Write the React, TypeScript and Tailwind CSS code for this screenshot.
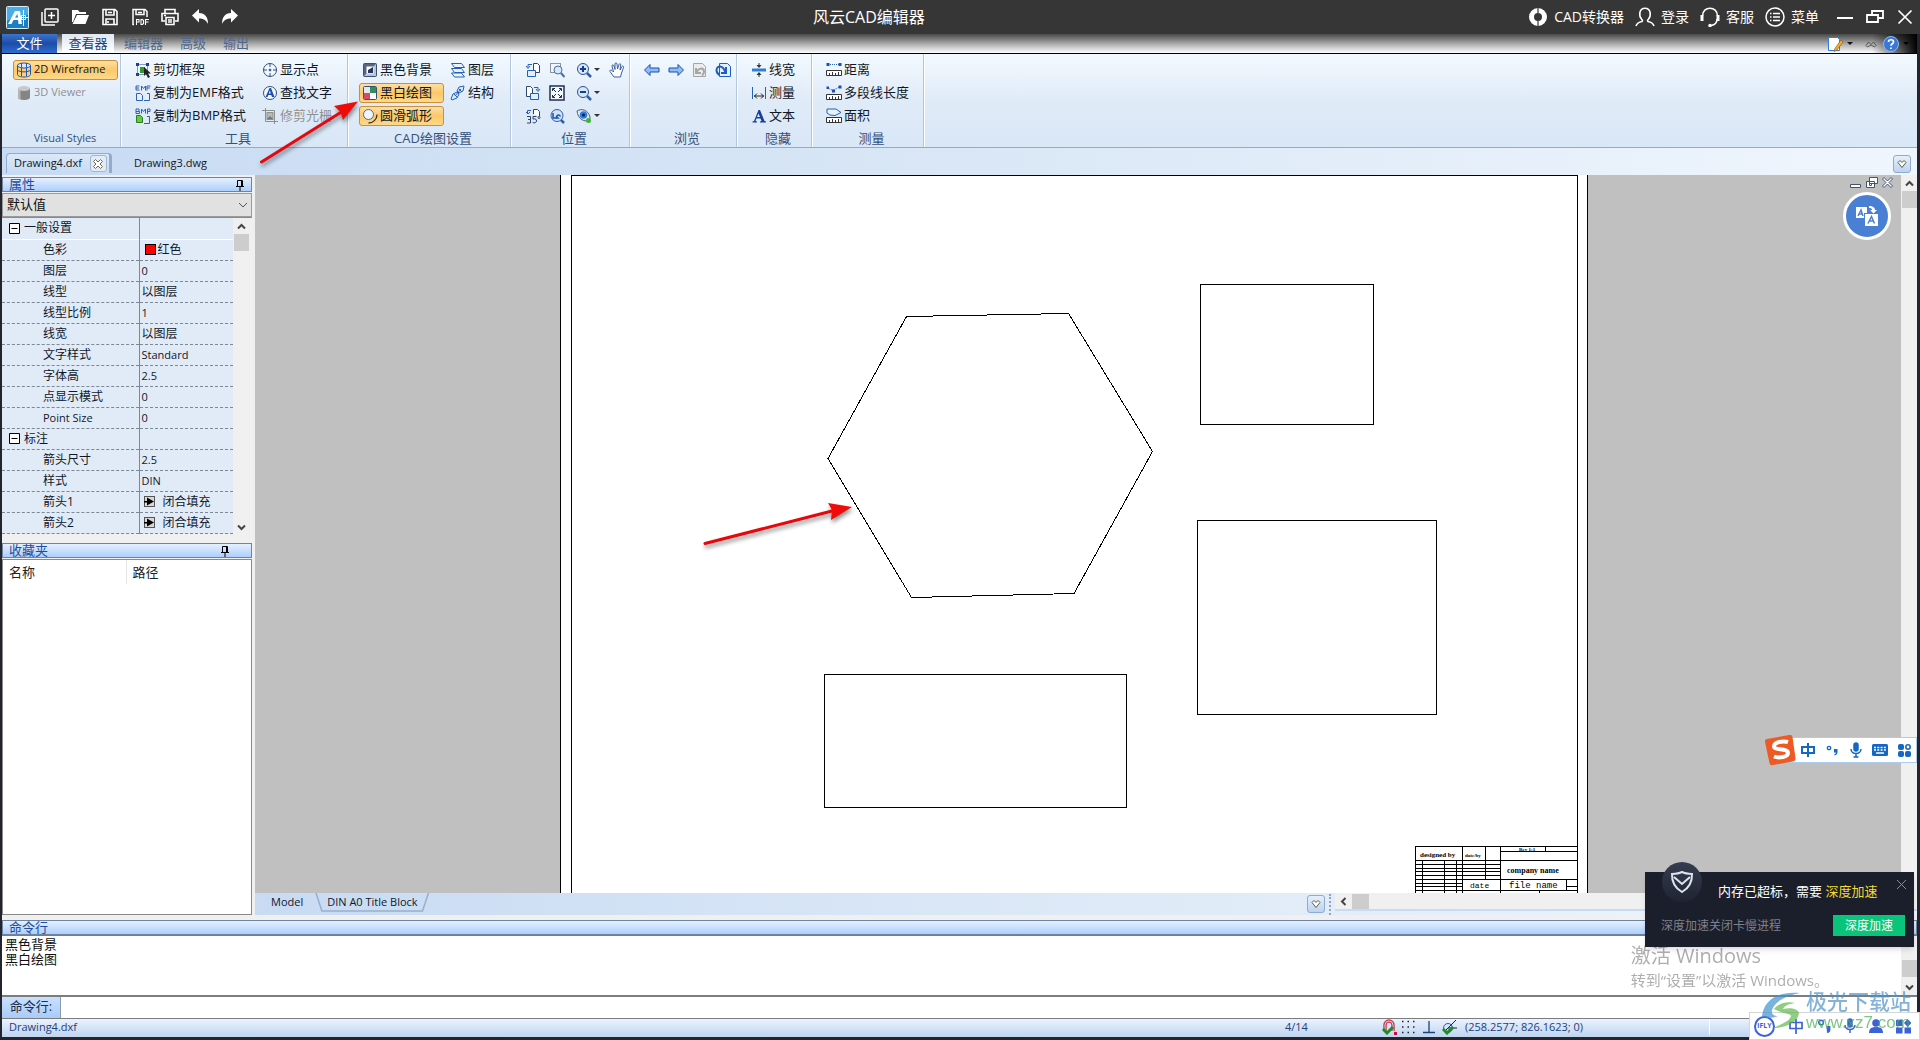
import React, { useState } from 'react';

const uiFont = "font-['Open_Sans','Noto_Sans_CJK_SC',sans-serif]";

const icons: Record<string, React.ReactNode> = {
  wireframe: (
    <g fill="none" stroke="#1d55b5">
      <ellipse cx="8" cy="3.5" rx="6.5" ry="2.5" fill="#dbe9fb" />
      <path d="M1.500 3.500v9c0 1.500 3 2.500 6.500 2.500s6.500-1 6.500-2.500v-9M5.500 5.500v9M10.500 5.500v9M1.500 8c2 2.500 11 2.500 13 0M5.500 1v4M10.500 1v4" />
    </g>
  ),
  cylinder: (
    <g>
      <path d="M2 3.500v9c0 1.500 2.500 2.500 6 2.500s6-1 6-2.500v-9z" fill="#858585" />
      <path d="M2 3.500v9c0 .8 1 1.500 2.500 2V4z" fill="#b5b5b5" />
      <ellipse cx="8" cy="3.500" rx="6" ry="2.500" fill="#c9c9c9" />
    </g>
  ),
  clip: (
    <g>
      <rect x="2.500" y="2.500" width="10" height="10" fill="none" stroke="#1f3f8f" strokeDasharray="1 1" />
      <path d="M1 1h3v3H1zM11 1h3v3h-3zM1 11h3v3H1z" fill="#1f3f8f" />
      <rect x="5" y="5" width="5" height="6" fill="#2f9b2f" />
      <path d="M9 5v9l2-2 2 4 2-1-2-3.500h3z" fill="#222" />
    </g>
  ),
  emf: (
    <g fill="none" stroke="#2b62b8">
      <path d="M4.500 1H1v4h3.500M1 3h3M6.500 5.500V1l2 2.500 2-2.500v4.500M15.500 1H12v4.500M12 3h3" />
      <path d="M1.500 8.500h4l2 2v5h-6zM9 15.500h5.500v-7H12" fill="#e6effb" />
    </g>
  ),
  bmp: (
    <g fill="none" stroke="#2b62b8">
      <path d="M1 1v4.500h3.500V3.500H1h3V1zM6.500 5.500V1l2 2.500 2-2.500v4.500M12.500 6V1H15v2.500h-2.500" />
      <path d="M9 15.500h5.500v-7H12" />
      <path d="M1.500 7.500h4l2 2v5h-6z" fill="#5fcf3f" stroke="#2c7c24" />
    </g>
  ),
  point: (
    <g fill="none" stroke="#34507c">
      <circle cx="8" cy="8" r="6.500" fill="#f3f8fe" />
      <path d="M8 1v4M8 11v4M1 8h4M11 8h4" />
      <circle cx="8" cy="8" r="1" fill="#2b62b8" stroke="#2b62b8" />
    </g>
  ),
  findText: (
    <g>
      <circle cx="8" cy="8" r="6.500" fill="#f3f8fe" stroke="#34507c" />
      <path d="M3.500 12 7.500 3h1.500l3.500 9h-2.500l-.8-2H6.300l-.7 2zM6.800 8.500h2L7.900 5.500z" fill="#1d4fae" />
    </g>
  ),
  raster: (
    <g fill="none" stroke="#8f8f8f">
      <path d="M3.500 0v13.500H16M0 2.500h12.500V16" />
      <rect x="5" y="4.500" width="6" height="7" fill="#b8b8b8" />
      <path d="M5 11l3-3 3 3z" fill="#777" stroke="none" />
    </g>
  ),
  blackBg: (
    <g>
      <rect x="1.500" y="1.500" width="13" height="13" rx="1" fill="#5a6680" stroke="#3c4f73" />
      <path d="M2 14 14 2v12z" fill="#b4c6e2" />
      <path d="M4.500 4.500h7v7h-7z" fill="#fff" />
      <path d="M6 11V8l5-3v6z" fill="#27375a" />
    </g>
  ),
  blackWhite: (
    <g>
      <rect x="1.500" y="1.500" width="13" height="13" rx="1" fill="#fff" stroke="#34507c" />
      <path d="M8 2h6v6H8z" fill="#2f8f56" />
      <path d="M2 8h6v6H2z" fill="#d6496b" />
      <path d="M2 2h6v6H2z" fill="#dfe8f4" />
    </g>
  ),
  arc: (
    <g fill="none">
      <circle cx="6.500" cy="6.500" r="5" fill="#eef5fe" stroke="#3b6cb8" />
      <path d="M15 6.500c0 5-4 8.500-8.500 8.500" stroke="#333" strokeWidth="1.300" />
    </g>
  ),
  layers: (
    <g fill="#e9f2fd" stroke="#2560b8">
      <path d="M1.500 11h10l3 4h-10zM1.500 6.500h10l3 4h-10zM1.500 1.500h10l3 4h-10z" />
    </g>
  ),
  structure: (
    <g fill="#dbe9fb" stroke="#2560b8">
      <path d="M9 2l5-1-1 5-4 2-2-2zM3 9l4-2 2 2-2 4-5 2-1-1z" />
      <path d="M5 11l6-7M4 9l3 3M9 4l3 3" fill="none" />
    </g>
  ),
  rotateLeft: (
    <g fill="#fff" stroke="#2b456f">
      <path d="M8.500 1.500h4l2 2v7h-6z" />
      <path d="M2.500 8.500h8v6h-8z" fill="#e3eefb" stroke="#2560b8" />
      <path d="M7 2.500H3V5M1 4l2 2.500L5 4" fill="none" stroke="#2560b8" />
    </g>
  ),
  rotateRight: (
    <g fill="#fff" stroke="#2b456f">
      <path d="M1.500 1.500h4l2 2v8h-6z" />
      <path d="M5.500 8.500h8v6h-8z" fill="#e3eefb" stroke="#2560b8" />
      <path d="M9 2.500h4V5M11 4l2 2.500L15 4" fill="none" stroke="#2560b8" />
    </g>
  ),
  rotate35: (
    <g fill="none" stroke="#2b456f">
      <path d="M8.500 6V1.500h4l2 2V8" fill="#fff" />
      <path d="M6 2.500H2.500V5M1 4l2 2 2-2" stroke="#2560b8" />
      <path d="M2 8.500h3.500v3H3h2.500v3.500H2M11.500 8.500H8v2.500c3-.5 3.500.5 3.500 2s-2 2.500-3.800 1.500" />
      <circle cx="14" cy="9.500" r="1" />
    </g>
  ),
  zoomWindow: (
    <g fill="none">
      <rect x="1.500" y="1.500" width="10" height="9" stroke="#333" strokeDasharray="1 1" />
      <circle cx="9" cy="8" r="4" fill="#d7e8fc" stroke="#4a6ea8" />
      <path d="M12 11l3.500 4" stroke="#4a6ea8" strokeWidth="2" />
    </g>
  ),
  fit: (
    <g fill="none" stroke="#1f2f4f">
      <rect x="1" y="1" width="14" height="14" fill="#f4f9ff" strokeWidth="1.500" />
      <path d="M3.500 6V3.500H6M10 3.500h2.500V6M12.500 10v2.500H10M6 12.500H3.500V10M4 4l3 3M12 4 9 7M12 12 9 9M4 12l3-3" />
    </g>
  ),
  zoomBack: (
    <g fill="none">
      <circle cx="8" cy="7.500" r="6" fill="#cfe2fa" stroke="#2d5fa8" />
      <path d="M12 12l3 3" stroke="#2d5fa8" strokeWidth="2.500" />
      <path d="M4 5v5h5L7.500 8.500c1-2 3-2 4 0" stroke="#1d4fae" strokeWidth="1.500" />
    </g>
  ),
  zoomIn: (
    <g fill="none">
      <circle cx="7" cy="7" r="5.500" fill="#d7e8fc" stroke="#2d4f8a" />
      <path d="M11 11l4 4" stroke="#2d5fa8" strokeWidth="2.500" />
      <path d="M4 7h6M7 4v6" stroke="#123f96" strokeWidth="2" />
    </g>
  ),
  zoomOut: (
    <g fill="none">
      <circle cx="7" cy="7" r="5.500" fill="#d7e8fc" stroke="#2d4f8a" />
      <path d="M11 11l4 4" stroke="#2d5fa8" strokeWidth="2.500" />
      <path d="M4 7h6" stroke="#123f96" strokeWidth="2" />
    </g>
  ),
  eye: (
    <g>
      <path d="M1 3c5-3 11-1 13 6 0 3-1 4-3 4C6 13 2 10 1 3z" fill="#dfeafa" stroke="#4d5d78" />
      <circle cx="7.500" cy="7" r="3.800" fill="#2f7de0" />
      <circle cx="7.500" cy="7" r="1.600" fill="#0b2350" />
      <circle cx="12.500" cy="12.500" r="2.500" fill="#3fb52f" />
    </g>
  ),
  hand: (
    <path d="M5 15 1 9.500c-.5-1.500 1-2 2-1l1.500 1.500L3 4c0-1.500 1.500-1.500 2 0l1 3.500V2c0-1.500 2-1.500 2 0l.5 5L10 2.500c.5-1.300 2-1 1.700.5L11 8l2-3.500c.7-1 2-.3 1.600.8L12.500 11l-1 4z" fill="#fff" stroke="#3a5f9c" />
  ),
  left: <path d="M.5 8 6 2.500v3.500h9v4H6v3.500z" fill="#8fbcf2" stroke="#1d4fae" />,
  right: <path d="M15.500 8 10 2.500v3.500H1v4h9v3.500z" fill="#8fbcf2" stroke="#1d4fae" />,
  undoPage: (
    <g fill="none" stroke="#a5a5a5">
      <path d="M1.500 1.500h9l3 3v10h-12z" fill="#ececec" />
      <path d="M4 6v5h5M4.500 10.500c2-5 7-5 7.500-1 0 1.500-.5 3-2 4" strokeWidth="2" />
    </g>
  ),
  redoPage: (
    <g fill="none" stroke="#1d5fc0">
      <path d="M4.500 1.500h8l3 3v10h-11z" fill="#e3eefb" />
      <path d="M11 5v6H6M10.500 10.500C8 3 2 3 1.500 8c0 2.500 1 4 3 5" strokeWidth="2" />
    </g>
  ),
  lineWidth: (
    <g>
      <path d="M1 6.500h14v3H1z" fill="#2e7dd8" />
      <path d="M8 6 5.500 3h5zM8 10l-2.500 3h5z" fill="#333" />
      <path d="M8 1v3M8 12v3" stroke="#333" />
    </g>
  ),
  dimension: (
    <g fill="none">
      <path d="M1.500 2v12M14.500 2v12" stroke="#2560b8" />
      <path d="M3 11h10M6 8.500 3.500 11 6 13.500M10 8.500l2.500 2.500-2.500 2.500" stroke="#222" />
    </g>
  ),
  textA: <path d="M1.500 14.500v-1l1.500-.5L7.500 2h1.500l4.500 11 1.500.5v1H9v-1l1.500-.5-1-2.500H5.500l-1 2.500 1.500.5v1zM6 9h3L7.500 5.500z" fill="#17409a" />,
  distance: (
    <g fill="none">
      <path d="M2 2.500h12" stroke="#2560b8" strokeDasharray="1 1" />
      <path d="M.5 1h3v3h-3zM12.500 1h3v3h-3z" fill="#1d4fae" />
      <path d="M.5 8.500h15v5H.5zM3.500 13v-2M6.500 13v-3M9.500 13v-2M12.500 13v-3" stroke="#333" fill="#fff" />
    </g>
  ),
  polyline: (
    <g fill="none">
      <path d="M1.500 3 7 5.500 14 1.500" stroke="#2560b8" strokeDasharray="1 1" />
      <path d="M.5 1.500H3V4H.5zM6 4.500h3v3H6zM12.500.500h3v3h-3z" fill="#1d4fae" />
      <path d="M.5 9.500h15v5H.5zM3.500 14v-2M6.500 14v-3M9.500 14v-2M12.500 14v-3" stroke="#333" fill="#fff" />
    </g>
  ),
  area: (
    <g fill="none">
      <path d="M1 1h9l5 3.500-6 3-5-.5-3-2z" stroke="#2560b8" fill="#e8f2fd" />
      <path d="M.5 9.500h15v5H.5zM3.500 14v-2M6.500 14v-3M9.500 14v-2M12.500 14v-3" stroke="#333" fill="#fff" />
    </g>
  ),
  magnet: (
    <g fill="none">
      <path d="M4 12V6a4 4 0 0 1 8 0v6" stroke="#d23b4b" strokeWidth="3.500" />
      <path d="M4 12V6a4 4 0 0 1 8 0v6" stroke="#b9d5f5" />
      <path d="M2 10l4 4 6-6" stroke="#1f8a28" strokeWidth="3" />
      <path d="M13 13h3v3h-3z" fill="#c1123c" />
    </g>
  ),
  dots: <path d="M1 2.500h13M1 8h13M1 13.500h13" stroke="#222" strokeWidth="1.500" strokeDasharray="1.500 4" />,
  ortho: <path d="M8 2v11.500M2 13.500h12" stroke="#22407a" strokeWidth="1.300" />,
  polar: (
    <g fill="none">
      <circle cx="7" cy="9" r="4.500" stroke="#2560b8" />
      <path d="M5 11 15 1M7 9h9" stroke="#222" />
      <path d="M2 10l4 4 6-6" stroke="#1f8a28" strokeWidth="3" />
    </g>
  ),
};

const Icon: React.FC<{ name: string }> = ({ name }) => (
  <svg className="h-4 w-4 shrink-0" viewBox="0 0 16 16" aria-hidden="true">
    {icons[name]}
  </svg>
);

interface ToolProps {
  icon: string;
  label?: string;
  title?: string;
  active?: boolean;
  disabled?: boolean;
  latin?: boolean;
  menu?: boolean;
}

const Tool: React.FC<ToolProps> = ({ icon, label, title, active, disabled, latin, menu }) => (
  <div className="flex h-[23px] items-center">
    <button
      type="button"
      aria-label={label ? undefined : title}
      disabled={disabled}
      className={`flex h-5 items-center gap-[2px] rounded-[3px] border px-[2px] whitespace-nowrap ${latin ? 'text-[11px]' : 'text-[13px]'} ${
        active ? 'w-full border-[#c98f3a] bg-linear-to-b from-[#fde0a4] via-[#fdc766] to-[#fed98a]' : 'border-transparent'
      } ${disabled ? 'text-[#909090]' : 'text-[#101828]'}`}
    >
      <Icon name={icon} />
      {label && <span>{label}</span>}
      {menu && <span className="h-0 w-0 border-x-[3px] border-t-[3px] border-x-transparent border-t-[#333]" />}
    </button>
  </div>
);

const Group: React.FC<{ title: string; width: string; latin?: boolean; children: React.ReactNode }> = ({ title, width, latin, children }) => (
  <section className={`flex flex-col border-r border-[#b3c6de] pt-1 shadow-[1px_0_0_#ffffff] ${width}`}>
    <div className="h-[69px] pl-[11px]">{children}</div>
    <h2 className={`flex h-5 items-end justify-center pl-2 leading-[18px] text-[#35507c] ${latin ? 'text-[11px]' : 'text-[13px]'}`}>{title}</h2>
  </section>
);

const TitleBar: React.FC = () => (
  <header className="flex h-[34px] shrink-0 items-center bg-[#363636] pr-[7px] pl-1.5 text-white">
    <div className="flex w-[42%] items-center gap-3">
      <svg className="h-[23px] w-[23px]" viewBox="0 0 23 23" aria-hidden="true">
        <rect x=".5" y=".5" width="22" height="22" rx="1" fill="#1c7fc4" stroke="#d7ecfa" />
        <path d="M1 1h21v8C14 8 8 11 1 15z" fill="#49aee6" />
        <path d="M2 18 9 5h5l2 13h-3.500l-.4-4H7.500l-2 4zM9 11.500h3l-.5-4z" fill="#fff" />
        <path d="M17.500 4v16M13 11.500h9M15.500 9.500h4v4h-4z" stroke="#fff" fill="none" />
      </svg>
      <div className="flex gap-3">
        <button type="button" aria-label="新建">
          <svg className="h-[18px] w-[18px]" viewBox="0 0 18 18" fill="none" stroke="#fff" strokeWidth="1.500">
            <rect x="4" y="1" width="13" height="13" rx="1" />
            <path d="M10.500 4v7M7 7.500h7M1 4v13h13" />
          </svg>
        </button>
        <button type="button" aria-label="打开">
          <svg className="h-[18px] w-[18px]" viewBox="0 0 18 18" fill="#fff">
            <path d="M1 14V2h6l1.500 2H15v2H5L2 14zM6 7h12l-3.500 9H1.500z" />
          </svg>
        </button>
        <button type="button" aria-label="保存">
          <svg className="h-[18px] w-[18px]" viewBox="0 0 18 18" fill="none" stroke="#fff" strokeWidth="1.600">
            <path d="M2 1.500h12l2 2v13H2zM5 2v5h8V2M5 16v-5h8v5M7 4.500h4M7 13v2" />
          </svg>
        </button>
        <button type="button" aria-label="另存为PDF">
          <svg className="h-[18px] w-[18px]" viewBox="0 0 18 18" fill="none" stroke="#fff" strokeWidth="1.500">
            <path d="M3 16.500H2v-15h12l2 2V9M5 2v4.500h8V2M7 4.500h4" />
            <path d="M5.500 17v-5.500H8V14H6M10 11.500h1.500l1 1v3l-1 1H10zM14.500 17v-5.500H18M15 14h2.500" strokeWidth="1.100" />
          </svg>
        </button>
        <button type="button" aria-label="打印">
          <svg className="h-[18px] w-[18px]" viewBox="0 0 18 18" fill="none" stroke="#fff" strokeWidth="1.600">
            <path d="M4 5V1.500h10V5M4 13H1V5.500h16V13h-3M5 9.500h8v7H5zM7 12h4M7 14h4M3 7.500h2" />
          </svg>
        </button>
        <button type="button" aria-label="撤销">
          <svg className="h-[18px] w-[18px]" viewBox="0 0 18 18" fill="#fff">
            <path d="M1 7.500 8 1v4c6 0 9 4 9 11-2-4-4.500-5.500-9-5.500v4z" />
          </svg>
        </button>
        <button type="button" aria-label="重做">
          <svg className="h-[18px] w-[18px]" viewBox="0 0 18 18" fill="#fff">
            <path d="M17 7.500 10 1v4C4 5 1 9 1 16c2-4 4.500-5.500 9-5.500v4z" />
          </svg>
        </button>
      </div>
    </div>
    <h1 className="pl-1.5 text-base leading-6">风云CAD编辑器</h1>
    <div className="flex flex-1 items-center justify-end gap-[11px] text-sm">
      <button type="button" className="flex items-center gap-1.5">
        <svg className="h-5 w-5" viewBox="0 0 20 20" fill="none" stroke="#fff">
          <circle cx="10" cy="10" r="6.500" strokeWidth="5" />
          <path d="M10 1v5M10 14v5" stroke="#363636" strokeWidth="1.200" />
        </svg>
        CAD转换器
      </button>
      <button type="button" className="flex items-center gap-1.5">
        <svg className="h-5 w-5" viewBox="0 0 20 20" fill="none" stroke="#fff" strokeWidth="1.600">
          <path d="M1 19c1-3 3-4 6-4.500.8-.5.500-1.500-.3-2.200C3.500 9 4 1.200 10 1.200s6.500 7.800 3.300 11.100c-.8.700-1 1.700-.3 2.200 3 .5 5 1.500 6 4.500" />
        </svg>
        登录
      </button>
      <button type="button" className="flex items-center gap-1.5">
        <svg className="h-5 w-5" viewBox="0 0 20 20" fill="none" stroke="#fff" strokeWidth="1.500">
          <path d="M2.500 9C2.500-1.500 17.500-1.500 17.500 9M17 12c0 4-2.500 6-6 6.500" />
          <path d="M2 8v6M18 8v6" strokeWidth="3" />
          <circle cx="10" cy="18.500" r="1" fill="#fff" />
        </svg>
        客服
      </button>
      <button type="button" className="flex items-center gap-1.5">
        <svg className="h-5 w-5" viewBox="0 0 20 20" fill="none" stroke="#fff" strokeWidth="1.500">
          <circle cx="10" cy="10" r="9" />
          <path d="M8 6.500h7M8 10h7M8 13.500h7M5 6.500h1.500M5 10h1.500M5 13.500h1.500" />
        </svg>
        菜单
      </button>
      <div className="ml-[7px] flex items-center gap-[13px]">
        <button type="button" aria-label="最小化">
          <svg className="h-4 w-4" viewBox="0 0 16 16" stroke="#fff" strokeWidth="2">
            <path d="M0 9h16" />
          </svg>
        </button>
        <button type="button" aria-label="还原">
          <svg className="h-4 w-[18px]" viewBox="0 0 18 16" fill="none" stroke="#fff" strokeWidth="1.800">
            <path d="M1 6h11v7H1zM6 6V2h11v7h-5" />
          </svg>
        </button>
        <button type="button" aria-label="关闭">
          <svg className="h-4 w-4" viewBox="0 0 16 16" stroke="#fff" strokeWidth="1.700">
            <path d="m1.500 1.500 13 13M14.500 1.500l-13 13" />
          </svg>
        </button>
      </div>
    </div>
  </header>
);

const MenuTabs: React.FC = () => (
  <nav className="flex h-5 shrink-0 items-center justify-between border-b border-black bg-linear-to-b from-[#4a4a4a] via-[#a8a8a8] to-white text-[13px] leading-4">
    <div className="flex h-full items-center">
      <button type="button" className="h-full w-[55px] bg-linear-to-b from-[#3d74cc] via-[#1c4da8] to-[#2f6cd0] pb-0.5 text-white">文件</button>
      <button type="button" className="ml-[5px] h-full w-[52px] bg-linear-to-b from-[#dfe7f2] to-white pb-0.5 text-[#1e3f77]">查看器</button>
      <button type="button" className="ml-2.5 pb-0.5 text-[#4c678f]">编辑器</button>
      <button type="button" className="ml-[17px] pb-0.5 text-[#4c678f]">高级</button>
      <button type="button" className="ml-[17px] pb-0.5 text-[#4c678f]">输出</button>
    </div>
    <div className="flex h-full items-center gap-1.5 bg-linear-to-r from-transparent via-transparent to-black pr-1">
      <button type="button" aria-label="样式" className="flex items-center gap-1">
        <svg className="h-4 w-4" viewBox="0 0 16 16">
          <path d="M1.500 1.500h9l2 2v11h-11z" fill="#fff" stroke="#2f7de0" />
          <path d="m14 4 2 2-6 8-3 1.500 1-3z" fill="#f0b12c" stroke="#8a5a16" strokeWidth=".7" />
        </svg>
        <span className="h-0 w-0 border-x-[3px] border-t-[3px] border-x-transparent border-t-[#111]" />
      </button>
      <button type="button" aria-label="折叠功能区" className="ml-1.5">
        <svg className="h-3 w-3" viewBox="0 0 12 12" fill="none" stroke="#555">
          <path d="M1 7.500 3.500 4 6 6.500 8.500 4 11 7.500 9.500 9 6 7 2.500 9z" />
        </svg>
      </button>
      <button type="button" aria-label="帮助" className="flex items-center gap-1 pr-1">
        <svg className="h-4 w-4" viewBox="0 0 16 16">
          <circle cx="8" cy="8" r="7.500" fill="#3b78d6" stroke="#8fb8f0" />
          <path d="M5.500 6c0-3 5-3 5 0 0 1.800-2.500 1.800-2.500 3.800M8 11.500v1.500" fill="none" stroke="#fff" strokeWidth="1.700" />
        </svg>
        <span className="h-0 w-0 border-x-[3px] border-t-[3px] border-x-transparent border-t-black" />
      </button>
    </div>
  </nav>
);

const Ribbon: React.FC = () => (
  <div className="flex h-[94px] shrink-0 border-b border-[#98aac2] bg-linear-to-b from-[#f3f9ff] via-[#e0ebf8] to-[#d9e7f7]">
    <Group title="Visual Styles" width="w-[119px]" latin>
      <div className="w-[105px]">
        <Tool icon="wireframe" label="2D Wireframe" active latin />
        <Tool icon="cylinder" label="3D Viewer" disabled latin />
      </div>
    </Group>
    <Group title="工具" width="w-[227px]">
      <div className="grid grid-flow-col grid-cols-[127px_1fr] grid-rows-3">
        <Tool icon="clip" label="剪切框架" />
        <Tool icon="emf" label="复制为EMF格式" />
        <Tool icon="bmp" label="复制为BMP格式" />
        <Tool icon="point" label="显示点" />
        <Tool icon="findText" label="查找文字" />
        <Tool icon="raster" label="修剪光栅" disabled />
      </div>
    </Group>
    <Group title="CAD绘图设置" width="w-[163px]">
      <div className="grid grid-flow-col grid-cols-[85px_1fr] grid-rows-3 gap-x-[3px]">
        <Tool icon="blackBg" label="黑色背景" />
        <Tool icon="blackWhite" label="黑白绘图" active />
        <Tool icon="arc" label="圆滑弧形" active />
        <Tool icon="layers" label="图层" />
        <Tool icon="structure" label="结构" />
      </div>
    </Group>
    <Group title="位置" width="w-[119px]">
      <div className="grid grid-cols-[24px_27px_33px_1fr]">
        <Tool icon="rotateLeft" title="向左旋转" />
        <Tool icon="zoomWindow" title="窗口缩放" />
        <Tool icon="zoomIn" title="放大" menu />
        <Tool icon="hand" title="平移" />
        <Tool icon="rotateRight" title="向右旋转" />
        <Tool icon="fit" title="适合窗口" />
        <Tool icon="zoomOut" title="缩小" menu />
        <span />
        <Tool icon="rotate35" title="旋转35°" />
        <Tool icon="zoomBack" title="上一视图" />
        <Tool icon="eye" title="视图" menu />
      </div>
    </Group>
    <Group title="浏览" width="w-[107px]">
      <div className="grid grid-cols-4">
        <Tool icon="left" title="后退" />
        <Tool icon="right" title="前进" />
        <Tool icon="undoPage" title="撤销视图" />
        <Tool icon="redoPage" title="重做视图" />
      </div>
    </Group>
    <Group title="隐藏" width="w-[75px]">
      <Tool icon="lineWidth" label="线宽" />
      <Tool icon="dimension" label="测量" />
      <Tool icon="textA" label="文本" />
    </Group>
    <Group title="测量" width="w-[112px]">
      <Tool icon="distance" label="距离" />
      <Tool icon="polyline" label="多段线长度" />
      <Tool icon="area" label="面积" />
    </Group>
  </div>
);

const HeartButton: React.FC<{ label: string }> = ({ label }) => (
  <button type="button" aria-label={label} className="flex h-[18px] w-[18px] items-center justify-center rounded-[3px] border border-[#8fabcf] bg-linear-to-b from-[#e6f0fb] to-[#bdd3ee]">
    <svg className="h-2.5 w-2.5" viewBox="0 0 10 10" fill="#fff" stroke="#5b5b45">
      <path d="M1 3.500 3 1.500l2 2 2-2 2 2L5 8.500z" />
    </svg>
  </button>
);

const DocumentTabs: React.FC = () => (
  <div className="flex h-[27px] shrink-0 items-end justify-between bg-linear-to-r from-[#c8dbf3] via-[#d9e7f6] to-[#f0f6fd] pr-1.5 pb-0.5 pl-1 text-[11px]">
    <div className="flex h-full items-end text-[#101828]">
      <div className="flex h-[20px] items-center gap-2 rounded-t border border-r-[3px] border-b-0 border-[#93abd0] bg-linear-to-b from-[#dbe8f8] to-[#c8dbf3] pr-0.5 pl-[7px]">
        <button type="button">Drawing4.dxf</button>
        <button type="button" aria-label="关闭标签" className="flex h-[17px] w-[17px] items-center justify-center rounded-[3px] border border-[#a3b5cf] bg-[#e2ecf8]">
          <svg className="h-3 w-3" viewBox="0 0 12 12" fill="#fff" stroke="#6f6a50">
            <path d="M1.500 3.500 3.500 1.500 6 4l2.500-2.500 2 2L8 6l2.500 2.500-2 2L6 8l-2.500 2.500-2-2L4 6z" />
          </svg>
        </button>
      </div>
      <button type="button" className="ml-[22px] h-5">Drawing3.dwg</button>
    </div>
    <HeartButton label="标签列表" />
  </div>
);

const PaneHeader: React.FC<{ title: string; pin?: string }> = ({ title, pin }) => (
  <div className="flex h-[15px] shrink-0 items-center justify-between border border-[#7083a0] bg-linear-to-b from-[#e4f0ff] to-[#adcffb] pl-1.5 text-[#1f4d9e]">
    <h2 className="pb-0.5 text-[13px] leading-3">{title}</h2>
    {pin && (
      <button type="button" aria-label="固定" className={pin}>
        <svg className="h-3 w-2" viewBox="0 0 8 12" fill="none" stroke="#000">
          <path d="M1.500 7V1.500h5V7M5.500 1v6M0 7.500h8M4 8v4" />
        </svg>
      </button>
    )}
  </div>
);

const Chevron: React.FC<{ dir: 'up' | 'down' | 'left' }> = ({ dir }) => (
  <svg className="h-[9px] w-[9px]" viewBox="0 0 9 9" fill="none" stroke="#444" strokeWidth="2">
    {dir === 'up' && <path d="M1 6.500 4.500 3 8 6.500" />}
    {dir === 'down' && <path d="M1 2.500 4.500 6 8 2.500" />}
    {dir === 'left' && <path d="M6.500 1 3 4.500 6.500 8" />}
  </svg>
);

const VScroll: React.FC<{ thumb: string }> = ({ thumb }) => (
  <div className="flex w-4 shrink-0 flex-col items-center bg-[#f0f0f0]">
    <button type="button" aria-label="向上滚动" className="flex h-4 items-center"><Chevron dir="up" /></button>
    <div className={`h-[17px] w-[15px] bg-[#cdcdcd] ${thumb}`} />
    <span className="flex-1" />
    <button type="button" aria-label="向下滚动" className="flex h-4 items-center"><Chevron dir="down" /></button>
  </div>
);

interface PropRow {
  name: string;
  value?: string;
  kind?: 'group' | 'color' | 'arrow';
}

const properties: PropRow[] = [
  { name: '一般设置', kind: 'group' },
  { name: '色彩', value: '红色', kind: 'color' },
  { name: '图层', value: '0' },
  { name: '线型', value: '以图层' },
  { name: '线型比例', value: '1' },
  { name: '线宽', value: '以图层' },
  { name: '文字样式', value: 'Standard' },
  { name: '字体高', value: '2.5' },
  { name: '点显示模式', value: '0' },
  { name: 'Point Size', value: '0' },
  { name: '标注', kind: 'group' },
  { name: '箭头尺寸', value: '2.5' },
  { name: '样式', value: 'DIN' },
  { name: '箭头1', value: '闭合填充', kind: 'arrow' },
  { name: '箭头2', value: '闭合填充', kind: 'arrow' },
];

const isLatin = (s?: string) => !!s && /^[\x20-\x7e]+$/.test(s);

const PropertyTable: React.FC = () => (
  <div className="flex h-[318px] shrink-0 border-t border-[#8a8a8a] bg-[#f0f0f0] pr-[3px]">
    <table className="h-[315px] flex-1 table-fixed border-collapse bg-[#e1ebf8] text-xs leading-4 text-[#101828]">
      <colgroup>
        <col className="w-[137px]" />
        <col />
      </colgroup>
      <tbody>
        {properties.map((p, i) => (
          <tr key={p.name} className={`h-[21px] border-b ${i === 0 ? 'border-white' : 'border-dashed border-[#7c8896]'}`}>
            <th scope="row" className={`border-r border-[#7c8896] p-0 text-left font-normal ${p.kind === 'group' ? 'pl-[7px]' : 'pl-[41px]'}`}>
              <span className={`flex items-center gap-1 ${isLatin(p.name) ? 'text-[11px]' : ''}`}>
                {p.kind === 'group' && (
                  <svg className="h-[11px] w-[11px]" viewBox="0 0 11 11" fill="#fff" stroke="#000">
                    <path d="M.5.5h10v10H.5zM2.500 5.500h6" />
                  </svg>
                )}
                {p.name}
              </span>
            </th>
            <td className="p-0 pl-0.5">
              <span className={`flex items-center ${isLatin(p.value) ? 'text-[11px]' : ''}`}>
                {p.kind === 'color' && <span className="mr-0.5 ml-[3px] h-[11px] w-[11px] border border-black bg-[#ff0000]" />}
                {p.kind === 'arrow' && (
                  <svg className="mr-2 ml-0.5 h-[11px] w-[11px]" viewBox="0 0 11 11">
                    <rect x=".5" y=".5" width="10" height="10" fill="#d8d8d8" stroke="#555" />
                    <path d="M3 1.500 10 5.500 3 9.500zM0 5h4v1.500H0z" fill="#000" />
                  </svg>
                )}
                {p.value}
              </span>
            </td>
          </tr>
        ))}
      </tbody>
    </table>
    <VScroll thumb="mb-auto" />
  </div>
);

const Sidebar: React.FC = () => (
  <aside className="flex w-[253px] shrink-0 flex-col bg-[#f0f0f0] pt-[2px] pr-[3px]">
    <PaneHeader title="属性" pin="mr-[7px]" />
    <div className="relative mt-px h-6">
      <select aria-label="对象" className="block h-6 w-full appearance-none border border-[#9a9a9a] bg-[#e1e1e1] pb-0.5 pl-1 text-[13px] leading-5 text-[#101010]">
        <option>默认值</option>
      </select>
      <svg className="pointer-events-none absolute top-2 right-1 h-2 w-2.5" viewBox="0 0 10 8" fill="none" stroke="#555">
        <path d="M1 2l4 4 4-4" />
      </svg>
    </div>
    <PropertyTable />
    <div className="mt-2 flex flex-1 flex-col">
      <PaneHeader title="收藏夹" pin="mr-[22px]" />
      <div className="mt-px flex-1 border border-[#8a8a8a] bg-white">
        <table className="w-full table-fixed text-[13px] leading-6 text-[#222]">
          <thead>
            <tr>
              <th className="w-[123px] border-r border-[#e5e5e5] pl-1.5 text-left font-normal">名称</th>
              <th className="pl-1.5 text-left font-normal">路径</th>
            </tr>
          </thead>
        </table>
      </div>
    </div>
  </aside>
);

const Drawing: React.FC = () => (
  <svg className="min-h-0 w-full flex-1" viewBox="0 0 1646 718" preserveAspectRatio="xMidYMin slice">
    <rect x="305" y="0" width="1028" height="718" fill="#fff" />
    <g fill="none" stroke="#000" shapeRendering="crispEdges">
      <path d="M305.500 0v718M1332.500 0v718" />
      <path d="M316.500 718V.5h1006v717.500" />
      <rect x="945.500" y="109.500" width="173" height="140" />
      <rect x="942.500" y="345.500" width="239" height="194" />
      <rect x="569.500" y="499.500" width="302" height="133" />
      <path d="m651.500 141.500 162-3 84 138-78.500 142-162.500 4-83.500-139z" />
      <path d="M1160.500 718v-46.500h162M1160.500 685.500h162M1207.500 671v47M1230.500 671v33M1245.500 671v47M1245.500 676.500h77M1290.500 671v5" />
      <path d="M1160 689.500h85M1160 693.500h85M1160 696.500h85M1160 700.500h85M1160 704.500h162M1160 708.500h47M1160 711.500h47M1160 715.500h162M1167.500 686v32M1189.500 686v32M1201.500 686v32M1311.500 704v11M1311.500 711.500h11M1284.500 715v3" />
    </g>
    <g fontFamily="'Liberation Mono', monospace" fill="#000">
      <g fontFamily="'Liberation Serif', serif" fontWeight="700" fontSize="8">
        <text x="1165" y="682" fontSize="7">designed by</text>
        <text x="1210" y="682" fontSize="5">date/by</text>
        <text x="1252" y="698">company name</text>
        <text x="1264" y="676" fontSize="5">Rev 1:1</text>
      </g>
      <text x="1215" y="713" fontSize="8">date</text>
      <text x="1254" y="713" fontSize="9">file name</text>
    </g>
    <g className="drop-shadow-[1px_3px_2px_rgba(0,0,0,0.45)]">
      <path d="M450 368.500 577 336" stroke="#e8060a" strokeWidth="3" strokeLinecap="round" />
      <path d="m597 332-24-4 4 7-1 10z" fill="#f00a0a" />
    </g>
  </svg>
);

const Canvas: React.FC = () => (
  <main className="relative flex min-w-0 flex-1 flex-col">
    <div className="flex min-h-0 flex-1">
      <div className="relative flex min-w-0 flex-1 flex-col overflow-hidden bg-[#c0c0c0]">
        <Drawing />
        <div className="absolute top-0.5 right-[7px] flex gap-1">
          {['M.5 7.500h10v3H.5z', 'M3.500.5h8v6h-8zM.5 4.500h8v6h-8zM3.500 6.500h2v2h-2z', 'M.5 2 2 .5 5.500 4 9 .5 10.500 2 7 5.500 10.500 9 9 10.500 5.500 7 2 10.500.5 9 4 5.500z'].map((d, i) => (
            <button key={d} type="button" aria-label={['最小化图纸', '还原图纸', '关闭图纸'][i]}>
              <svg className="h-3 w-3" viewBox="0 0 12 12" fill="#fff" stroke="#44546e">
                <path d={d} />
              </svg>
            </button>
          ))}
        </div>
        <button type="button" aria-label="翻译" className="absolute top-[17px] right-2.5 flex h-12 w-12 items-center justify-center rounded-full border-[3px] border-white bg-[#4a80d4]">
          <svg className="h-[22px] w-6" viewBox="0 0 24 22">
            <path d="M1 2h11v6h-3v5H1z" fill="#fff" />
            <path d="M10 9h13v12H10z" fill="#fff" />
            <path d="M14 1c4 0 6 2 6 4h2l-3.500 3.500L15 5h2c0-1.500-1-2-3-2z" fill="#fff" />
            <path d="m3 11 3-6 2 6M4.500 9h3M13 18.500l3.500-7 3 7M14.500 16h4" fill="none" stroke="#4a80d4" strokeWidth="1.500" />
          </svg>
        </button>
      </div>
      <VScroll thumb="mb-auto" />
    </div>
    <div className="flex h-[22px] shrink-0 bg-linear-to-r from-[#c8dbf3] via-[#dde9f7] to-[#f0f6fd] text-[11px] text-[#101828]">
      <div className="flex flex-1 items-center justify-between">
        <div className="flex h-full items-start">
          <button type="button" className="h-[18px] pr-3 pl-4">Model</button>
          <button type="button" className="relative h-[19px] px-3">
            <svg className="absolute inset-0 h-full w-full" viewBox="0 0 116 19" preserveAspectRatio="none" fill="none" stroke="#98aecb" strokeWidth="1.500">
              <path d="M1 0 7 18h102l6-18" />
            </svg>
            <span className="relative">DIN A0 Title Block</span>
          </button>
        </div>
        <div className="mr-1 flex items-center gap-1">
          <HeartButton label="布局列表" />
          <span className="h-[21px] border-l-2 border-dotted border-[#8fa3c0]" />
        </div>
      </div>
      <div className="mb-1 flex w-[582px] items-center border-b-2 border-[#c8dbf3] bg-[#f0f0f0] pl-1">
        <button type="button" aria-label="向左滚动"><Chevron dir="left" /></button>
        <div className="ml-1 h-[15px] w-[17px] bg-[#cdcdcd]" />
      </div>
    </div>
  </main>
);

const CommandPane: React.FC = () => {
  const [command, setCommand] = useState('');
  return (
    <section className="shrink-0 bg-[#f0f0f0] pt-[5px]">
      <PaneHeader title="命令行" />
      <div className="flex h-[60px] border-t border-[#7c7c7c] bg-white">
        <div className="flex-1 pt-px pl-[3px] text-[13px] leading-[15px] text-[#101010]">
          <p>黑色背景</p>
          <p>黑白绘图</p>
        </div>
        <VScroll thumb="mt-2" />
      </div>
      <div className="flex h-6 border-t-2 border-b border-[#7c7c7c] bg-white text-[13px]">
        <label htmlFor="command" className="flex w-[59px] items-center justify-center border-r border-[#8a9ab0] bg-linear-to-b from-[#c9e0fe] to-[#a9cbf8] pb-0.5 text-[#1c2c4c]">命令行:</label>
        <input id="command" value={command} onChange={e => setCommand(e.target.value)} className="flex-1 px-1 outline-none" />
      </div>
      <footer className="flex h-[18px] items-center bg-linear-to-b from-[#eaf3fe] to-[#bfd4f0] pb-0.5 text-[11px] text-[#22407a]">
        <span className="flex-1 pl-[7px]">Drawing4.dxf</span>
        <span className="w-24">4/14</span>
        <div className="flex w-[84px] gap-1">
          <Icon name="magnet" />
          <Icon name="dots" />
          <Icon name="ortho" />
          <Icon name="polar" />
        </div>
        <span className="w-[245px] border-r border-white">(258.2577; 826.1623; 0)</span>
        <span className="w-[207px]" />
      </footer>
    </section>
  );
};

const MemoryAlert: React.FC = () => (
  <div className="absolute right-1.5 bottom-[93px] h-[75px] w-[269px] bg-[#1b1f2b] text-white shadow-md">
    <div className="absolute -top-2.5 left-[17px] flex h-10 w-10 items-center justify-center rounded-full bg-linear-to-b from-[#363d50] to-[#1f2432]">
      <svg className="h-6 w-6" viewBox="0 0 24 24" fill="none" stroke="#dfe3ee" strokeWidth="2">
        <path d="M12 2c3 1.500 6 1.800 10 2 .3 8-3 14-10 18C5 18 1.700 12 2 4c4-.2 7-.5 10-2z" />
        <path d="m4 7 8 7 8-7" />
      </svg>
    </div>
    <button type="button" aria-label="关闭提示" className="absolute top-2 right-2">
      <svg className="h-[9px] w-[9px]" viewBox="0 0 9 9" stroke="#8b8f9c">
        <path d="m0 0 9 9M9 0 0 9" />
      </svg>
    </button>
    <p className="pt-[7px] pl-[73px] text-[13px] leading-6">
      内存已超标，需要 <span className="text-[#f2dc2e]">深度加速</span>
    </p>
    <div className="flex items-center justify-between pt-3 pr-[9px] pl-4 text-xs">
      <span className="text-[#7d818d]">深度加速关闭卡慢进程</span>
      <button type="button" className="h-[21px] w-[72px] bg-[#0bc47c]">深度加速</button>
    </div>
  </div>
);

const SogouBar: React.FC = () => (
  <div className="absolute right-[3px] bottom-[277px] flex h-[26px] items-center border border-[#a9cdf0] bg-white pl-4 text-[#1268c4]">
    <svg className="absolute -top-1 -left-4 h-8 w-8" viewBox="0 0 32 32">
      <path d="m3 5 22-4c2 0 3 0 3.500 2l3 21c0 2-.5 3-2.500 3.500L9 31c-2 .5-3 0-3.500-2L1 8c-.3-1.500.5-2.700 2-3z" fill="#ee5a24" />
      <path d="M24 8c-5-1.500-14 0-14 4.500 0 4 14 1.500 14 6.500 0 4-9 5.500-14 3.500" fill="none" stroke="#fff" strokeWidth="4" />
    </svg>
    <span className="flex w-6 justify-center">
      <svg className="h-4 w-4" viewBox="0 0 16 16" fill="none" stroke="currentColor" strokeWidth="2">
        <path d="M2 5h12v6H2zM8 1v14" />
      </svg>
    </span>
    <span className="flex w-6 justify-center">
      <svg className="h-3 w-3" viewBox="0 0 12 12">
        <circle cx="3" cy="4" r="1.700" fill="none" stroke="currentColor" strokeWidth="1.300" />
        <path d="M8 5h3.500v3c0 2-1 3-3 3.500V10c1 0 1.300-.5 1.300-1.500H8z" fill="currentColor" />
      </svg>
    </span>
    <span className="flex w-6 justify-center">
      <svg className="h-4 w-3" viewBox="0 0 12 16" fill="none" stroke="currentColor" strokeWidth="1.500">
        <rect x="4" y="1" width="4" height="8" rx="2" fill="currentColor" />
        <path d="M1 7c0 6 10 6 10 0M6 12v3M3.500 15h5" />
      </svg>
    </span>
    <span className="flex w-6 justify-center">
      <svg className="h-3 w-4" viewBox="0 0 16 12">
        <rect width="16" height="12" rx="1.500" fill="currentColor" />
        <path d="M2 3.500h12M2 6h12" stroke="#fff" strokeWidth="1.500" strokeDasharray="2 1.300" />
        <path d="M4 9h8" stroke="#fff" strokeWidth="1.500" />
      </svg>
    </span>
    <span className="flex w-6 justify-center">
      <svg className="h-[13px] w-[13px]" viewBox="0 0 13 13" fill="currentColor">
        <rect width="6" height="6" rx="2" />
        <circle cx="10" cy="3" r="2.200" fill="none" stroke="currentColor" strokeWidth="1.600" />
        <rect y="7" width="6" height="6" rx="2" />
        <rect x="7" y="7" width="6" height="6" rx="2" />
      </svg>
    </span>
  </div>
);

const InputMethodBar: React.FC = () => (
  <div className="absolute right-0 bottom-0 flex h-7 w-[171px] items-center justify-between border border-[#d5d5d5] bg-white pr-2 pl-1 text-[#3b62d9]">
    <span className="flex h-[21px] w-[21px] items-center justify-center rounded-full border-2 border-current text-[7px] font-bold">iFLY</span>
    <svg className="h-4 w-4" viewBox="0 0 16 16" fill="none" stroke="currentColor" strokeWidth="1.700">
      <path d="M2 4.500h12v6H2zM8 1v15" />
    </svg>
    <svg className="h-3.5 w-3.5" viewBox="0 0 12 12">
      <circle cx="3.500" cy="3" r="2" fill="none" stroke="currentColor" strokeWidth="1.300" />
      <path d="M8 6h3.500v3c0 2-1 3-3 3V10.500z" fill="currentColor" />
    </svg>
    <svg className="h-4 w-3" viewBox="0 0 12 16" fill="none" stroke="currentColor" strokeWidth="1.500">
      <rect x="4" y="1" width="4" height="8" rx="2" fill="currentColor" />
      <path d="M1 7c0 6 10 6 10 0M6 12v3" />
    </svg>
    <svg className="h-3.5 w-3.5" viewBox="0 0 14 14" fill="currentColor">
      <circle cx="7" cy="4" r="3.800" />
      <path d="M0 14c0-4 2-6 7-6s7 2 7 6z" />
    </svg>
    <svg className="h-[15px] w-[15px]" viewBox="0 0 15 15" fill="currentColor">
      <path d="M0 1h6.500v6H0zM0 8.500h6.500v6H0zM8.500 8.500H15v6H8.500zM11.700 0 15.500 4l-3.800 4L8 4z" />
    </svg>
  </div>
);

const SiteMark: React.FC = () => (
  <div className="pointer-events-none absolute right-[9px] bottom-2 flex items-center gap-0.5 opacity-70">
    <svg className="h-10 w-11" viewBox="0 0 44 40">
      <path d="M2 26C4 10 18 1 40 3 26 6 15 11 12 20c-1 4 2 6 6 6-7 3-13 2-16 0z" fill="#3f93cf" />
      <path d="M14 19c5-6 13-8 21-6-7 1-11 3-12 6 8-2 15 0 16 4-1 9-12 15-27 15 12-4 18-8 19-12 0-3-8-2-17-7z" fill="#5fb84e" />
    </svg>
    <div className="whitespace-nowrap">
      <p className="text-[21px] leading-[26px] font-medium text-[#4f94cc]">极光下载站</p>
      <p className="font-['Liberation_Sans',sans-serif] text-[17px] leading-[18px] text-[#44b04c]">www.xz7.com</p>
    </div>
  </div>
);

const App: React.FC = () => (
  <div className={`relative flex h-screen flex-col overflow-hidden bg-[#2b2f3a] ${uiFont}`}>
    <TitleBar />
    <div className="flex min-h-0 flex-1 flex-col border-r-[3px] border-b-[3px] border-l-[2px] border-[#22252e]">
      <MenuTabs />
      <Ribbon />
      <DocumentTabs />
      <div className="flex min-h-0 flex-1 bg-[#f0f0f0]">
        <Sidebar />
        <Canvas />
      </div>
      <CommandPane />
    </div>

    {/* pointer to the active drawing mode */}
    <svg className="pointer-events-none absolute top-[98px] left-[256px] h-[72px] w-[108px] drop-shadow-[1px_3px_2px_rgba(0,0,0,0.45)]" viewBox="0 0 108 72">
      <path d="M5.500 64 87 13" stroke="#e8060a" strokeWidth="3" strokeLinecap="round" />
      <path d="M102 3.500 78 8l6.500 6L87 22z" fill="#f00a0a" />
    </svg>

    <div className="pointer-events-none absolute right-[91px] bottom-[50px] whitespace-nowrap text-[#9a9a9a] opacity-80">
      <p className="text-xl leading-7">激活 Windows</p>
      <p className="text-[15px] leading-5">转到“设置”以激活 Windows。</p>
    </div>
    <MemoryAlert />
    <SogouBar />
    <InputMethodBar />
    <SiteMark />
  </div>
);

export default App;
